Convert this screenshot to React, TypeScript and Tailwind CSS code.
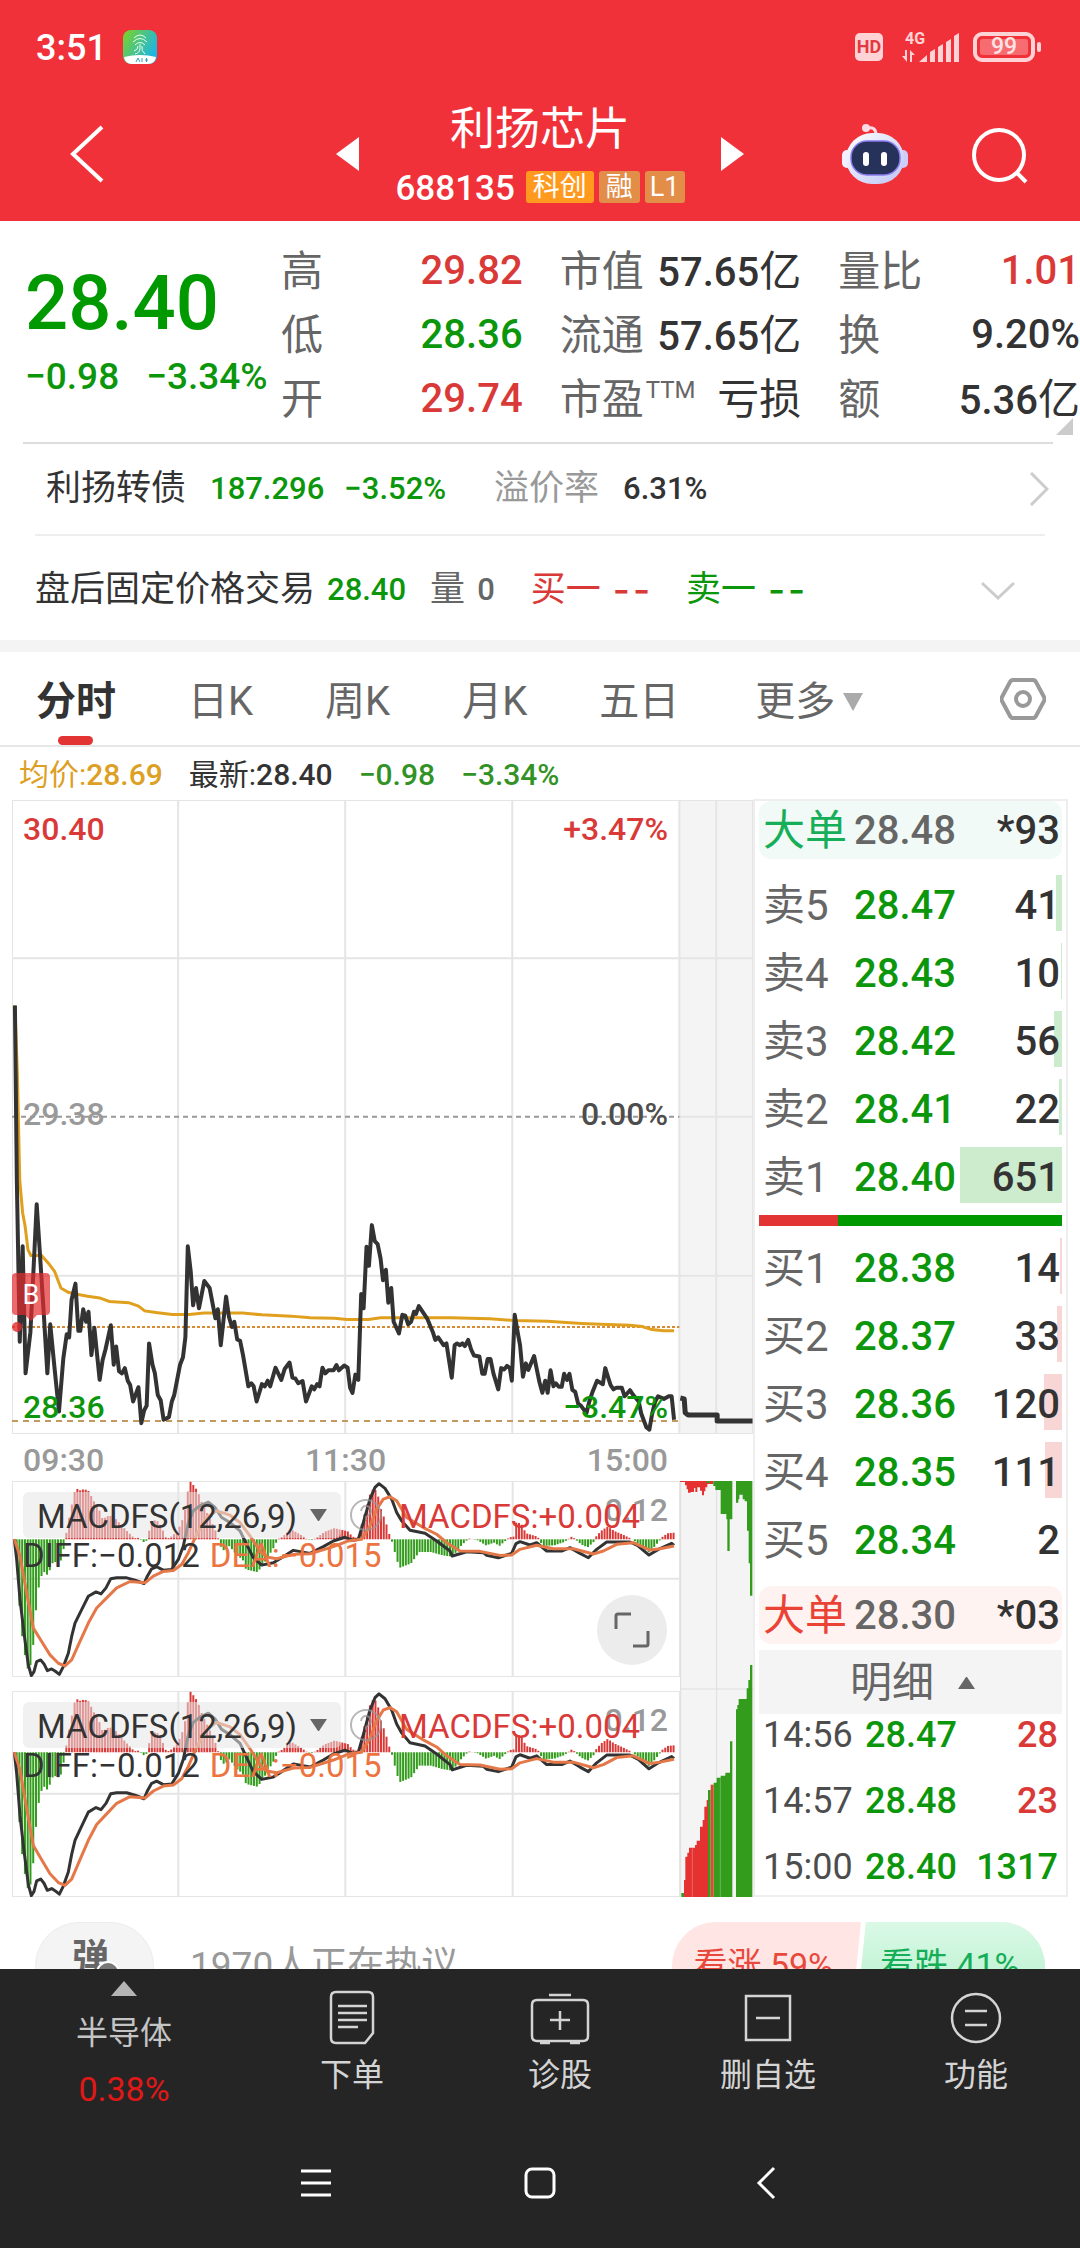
import { useState } from "react";

type Quote = { label: string; sup?: string; value: string; tone: string };
type Level = { label: string; price: string; volume: string; depth: number };

const RED = "text-[#d93a38]";
const GREEN = "text-[#0b960b]";
const DARK = "text-[#333333]";

const quotes: Quote[] = [
  { label: "高", value: "29.82", tone: RED },
  { label: "市值", value: "57.65亿", tone: DARK },
  { label: "量比", value: "1.01", tone: RED },
  { label: "低", value: "28.36", tone: GREEN },
  { label: "流通", value: "57.65亿", tone: DARK },
  { label: "换", value: "9.20%", tone: DARK },
  { label: "开", value: "29.74", tone: RED },
  { label: "市盈", sup: "TTM", value: "亏损", tone: DARK },
  { label: "额", value: "5.36亿", tone: DARK },
];

const asks: Level[] = [
  { label: "卖5", price: "28.47", volume: "41", depth: 6 },
  { label: "卖4", price: "28.43", volume: "10", depth: 1 },
  { label: "卖3", price: "28.42", volume: "56", depth: 8 },
  { label: "卖2", price: "28.41", volume: "22", depth: 3 },
  { label: "卖1", price: "28.40", volume: "651", depth: 102 },
];

const bids: Level[] = [
  { label: "买1", price: "28.38", volume: "14", depth: 2 },
  { label: "买2", price: "28.37", volume: "33", depth: 5 },
  { label: "买3", price: "28.36", volume: "120", depth: 18 },
  { label: "买4", price: "28.35", volume: "111", depth: 17 },
  { label: "买5", price: "28.34", volume: "2", depth: 0 },
];

const trades = [
  { time: "14:56", price: "28.47", volume: "28", tone: RED },
  { time: "14:57", price: "28.48", volume: "23", tone: RED },
  { time: "15:00", price: "28.40", volume: "1317", tone: GREEN },
];

const priceLine =
  "30,496 34,900 40,1272 46,1052 52,1345 62,1250 70,1070 75,955 82,1075 90,1215 97,1345 103,1232 112,1335 121,1433 130,1310 137,1255 142,1262 147,1175 155,1138 161,1247 165,1247 171,1197 177,1226 182,1203 188,1303 194,1240 205,1360 211,1315 217,1290 228,1234 234,1325 239,1283 245,1340 251,1345 257,1333 263,1362 268,1372 274,1410 285,1377 291,1460 297,1430 302,1420 307,1276 314,1325 319,1345 325,1395 331,1407 337,1452 348,1446 354,1410 359,1395 371,1325 377,1308 382,1262 387,1052 393,1110 398,1188 404,1148 410,1195 421,1132 432,1148 444,1218 449,1197 455,1280 466,1168 472,1215 478,1238 483,1226 489,1267 495,1270 501,1303 512,1375 518,1368 523,1375 529,1410 540,1370 546,1375 552,1362 557,1375 568,1332 580,1360 587,1335 597,1320 603,1355 609,1357 615,1368 624,1363 631,1410 643,1375 648,1382 654,1370 659,1375 665,1332 671,1345 677,1338 688,1338 694,1326 699,1338 710,1327 717,1332 722,1378 727,1390 733,1348 739,1360 745,1162 750,1195 756,1053 761,1097 767,1003 773,1040 779,1047 785,1080 790,1130 796,1106 801,1182 807,1148 812,1226 823,1253 830,1210 836,1212 842,1232 848,1226 854,1203 858,1208 864,1190 881,1218 893,1250 898,1268 904,1262 915,1280 921,1276 932,1355 938,1280 943,1276 949,1280 954,1276 959,1282 966,1268 972,1290 978,1304 989,1306 995,1346 1000,1346 1006,1312 1012,1312 1018,1345 1028,1382 1034,1333 1040,1336 1046,1328 1052,1333 1056,1362 1062,1210 1068,1250 1073,1280 1079,1353 1085,1322 1090,1337 1102,1305 1108,1338 1113,1365 1119,1390 1125,1362 1130,1390 1136,1338 1142,1375 1147,1368 1153,1376 1159,1376 1164,1346 1170,1360 1175,1346 1181,1383 1187,1388 1193,1415 1199,1420 1210,1437 1216,1410 1222,1390 1232,1362 1244,1370 1249,1333 1255,1355 1260,1372 1266,1382 1272,1378 1283,1378 1289,1398 1300,1384 1306,1394 1318,1410 1323,1437 1334,1470 1340,1475 1346,1437 1352,1410 1358,1398 1370,1404 1380,1398 1386,1398 1391,1452";

const averageLine =
  "30,496 35,650 40,900 46,975 51,1005 57,1060 63,1073 85,1073 100,1092 112,1110 125,1148 140,1158 155,1162 180,1167 205,1171 225,1179 265,1182 285,1190 298,1201 325,1205 355,1209 390,1209 420,1206 500,1206 540,1210 600,1213 640,1217 690,1218 715,1221 760,1221 785,1217 930,1217 1010,1219 1060,1223 1130,1225 1200,1230 1240,1232 1300,1234 1325,1237 1345,1244 1370,1247 1391,1247";

const diffLine =
  "43,240 50,300 60,420 72,520 85,615 94,647 102,635 110,605 122,600 132,612 142,632 155,627 165,633 178,643 190,620 205,580 215,530 225,490 245,450 265,410 288,397 303,403 318,385 332,358 350,355 380,355 405,362 432,372 442,350 455,328 470,322 490,332 515,330 535,300 550,260 565,190 580,155 600,140 625,129 645,145 665,175 690,190 720,215 740,255 760,295 785,317 820,310 845,295 880,273 930,282 970,262 1000,245 1035,234 1060,243 1075,240 1090,190 1110,120 1125,85 1137,74 1155,88 1175,120 1190,160 1205,185 1230,213 1275,222 1310,245 1350,275 1357,290 1400,277 1450,280 1460,288 1495,295 1535,282 1548,253 1560,247 1590,257 1610,250 1640,275 1685,275 1710,265 1740,282 1765,295 1790,270 1820,248 1890,248 1915,260 1947,287 1975,270 2015,252 2022,258";

const deaLine =
  "43,240 60,290 80,400 100,505 125,545 150,585 175,610 195,618 215,600 240,545 265,490 290,445 320,415 350,385 390,366 435,370 460,350 490,336 520,333 545,315 565,280 590,225 620,175 650,155 690,168 720,190 750,230 780,275 800,293 830,298 880,285 930,283 1000,262 1045,245 1085,240 1110,200 1130,150 1150,120 1170,113 1190,125 1220,175 1270,205 1310,225 1340,250 1380,275 1440,276 1500,288 1535,287 1560,270 1610,258 1660,268 1720,268 1780,284 1810,275 1850,255 1900,250 1950,272 1980,268 2022,260";

// turning points of the histogram, [x, height above the zero line]
const histogram: [number, number][] = [
  [43, 0], [51, -110], [59, -275], [67, -300], [75, -375], [83, -392], [92, -365], [100, -280], [108, -170],
  [117, -125], [125, -98], [133, -98], [141, -110], [150, -80], [158, -65], [170, -72], [183, -60], [192, -2],
  [200, 40], [208, 85], [216, 118], [224, 156], [234, 145], [250, 150], [265, 143], [275, 118], [290, 100],
  [305, 60], [325, 72], [345, 60], [365, 38], [385, 18], [400, 3], [415, 5], [424, -8], [434, -8], [440, 2],
  [448, 45], [465, 60], [480, 40], [495, 5], [505, 3], [530, 25], [545, 60], [555, 100], [562, 155], [570, 175],
  [578, 160], [590, 145], [600, 115], [615, 85], [640, 35], [650, 8], [658, -20], [670, -35], [685, -20],
  [710, -50], [725, -60], [735, -90], [770, -98], [790, -70], [820, -22], [830, 0], [845, 8], [870, 30],
  [905, 10], [915, 2], [930, -3], [945, 3], [970, 22], [1000, 33], [1040, 24], [1055, 8], [1075, 2], [1083, 50],
  [1095, 90], [1105, 130], [1119, 155], [1130, 135], [1140, 90], [1155, 50], [1163, 20], [1170, 4], [1178, -25],
  [1187, -60], [1196, -85], [1230, -72], [1255, -38], [1290, -38], [1325, -48], [1355, -52], [1375, -25],
  [1395, -5], [1405, 2], [1430, -3], [1455, -18], [1480, -10], [1495, -20], [1515, -3], [1525, 6], [1538, 8],
  [1543, 50], [1560, 48], [1575, 18], [1610, 8], [1625, -20], [1660, -18], [1690, -8], [1705, 3], [1710, 8],
  [1720, 3], [1740, -15], [1760, -24], [1778, -8], [1785, 8], [1800, 25], [1820, 38], [1840, 25], [1870, 12],
  [1890, 2], [1905, -8], [1945, -40], [1975, -5], [1985, 8], [2000, 18], [2022, 20],
];

function heightAt(x: number) {
  const i = histogram.findIndex(([px]) => px >= x);
  if (i <= 0) return histogram[0][1];
  const [x0, h0] = histogram[i - 1];
  const [x1, h1] = histogram[i];
  return h0 + ((h1 - h0) * (x - x0)) / (x1 - x0);
}

const bars = Array.from({ length: 239 }, (_, i) => 47 + i * 8.28).map((x) => ({ x, h: heightAt(x) }));

function StatusBar() {
  return (
    <div className="flex h-[94px] items-center justify-between pr-[39px] pl-9 text-white">
      <div className="flex items-center gap-4">
        <span className="pt-0.5 text-[36px] leading-10 font-medium">3:51</span>
        <svg width="34" height="34" viewBox="0 0 34 34">
          <defs>
            <linearGradient id="app" x1="0" x2="1" y1="0" y2="0.6">
              <stop offset="0" stopColor="#7ed321" />
              <stop offset="1" stopColor="#1cb5e8" />
            </linearGradient>
          </defs>
          <rect width="34" height="34" rx="8" fill="url(#app)" />
          <path d="M1 27q16-4 32 0q-1 7-8 7H9q-7 0-8-7Z" fill="#fff" />
          <g fill="none" stroke="#e9fff0" strokeWidth="1">
            <path d="M11 8q6-6 12 0M10 12q7-7 14 0M12 15q5-5 10 0M17 14v4q0 5-5 6M19 16q-1 5 3 8M15 16q0 4-4 5" />
          </g>
          <path d="M13 32l2-4 2 4M19 28v4M22 30h3M23.500 28v4" stroke="#35a0b8" fill="none" />
        </svg>
      </div>
      <div className="flex items-center">
        <span className="flex h-7 w-7 items-center justify-center rounded-[5px] bg-[#ffd3d5] text-[18px] leading-7 font-bold text-[#e23a40]">
          HD
        </span>
        <div className="ml-[18px]">
          <svg className="overflow-visible" width="60" height="32" viewBox="0 0 60 32" fill="#ffd3d5">
            <text x="4" y="13" fontSize="16" fontWeight="700">4G</text>
            <path d="M4 19h2v12L1 25h3ZM9 31V19l5 5h-3v7Z" />
            <path d="M18 31l8-7v7ZM29 21l5-3v13h-5ZM37 16l5-3v18h-5ZM45 11l5-3v23h-5ZM53 5l5-3v29h-5Z" />
          </svg>
        </div>
        <div className="ml-3 flex h-[30px] w-[62px] rounded-[9px] border-4 border-[#ffd3d5] p-[3px]">
          <span className="flex flex-1 items-center justify-center rounded-[3px] bg-[#f76c71] text-[23px] leading-4 font-medium text-[#ffe3e4]">
            99
          </span>
        </div>
        <span className="ml-0.5 h-2.5 w-1 rounded bg-[#ffd3d5]" />
      </div>
    </div>
  );
}

function Robot() {
  return (
    <svg width="66" height="62" viewBox="0 0 66 62">
      <defs>
        <linearGradient id="shell" x1="0" x2="1" y1="0" y2="1">
          <stop offset="0" stopColor="#ffffff" />
          <stop offset="1" stopColor="#bdc4f5" />
        </linearGradient>
      </defs>
      <path d="M25 5q9-2 9 7" fill="none" stroke="#fbdce6" strokeWidth="3" />
      <circle cx="24" cy="5" r="4" fill="#fbdce6" />
      <rect x="0" y="27" width="10" height="18" rx="5" fill="#f4efff" />
      <rect x="56" y="27" width="10" height="18" rx="5" fill="#cfcdf8" />
      <rect x="4" y="10" width="58" height="51" rx="26" fill="url(#shell)" />
      <rect x="9" y="18" width="49" height="34" rx="16" fill="#26325a" stroke="#8a7bf0" strokeWidth="1.500" />
      <rect x="21" y="29" width="6" height="14" rx="3" fill="#fff" />
      <rect x="39" y="29" width="6" height="14" rx="3" fill="#fff" />
    </svg>
  );
}

function TitleBar() {
  return (
    <div className="grid h-[127px] grid-cols-[1fr_408px_1fr] text-white">
      <div className="flex items-center pb-2 pl-[69px]">
        <button aria-label="返回">
          <svg width="36" height="60" viewBox="0 0 36 60" fill="none" stroke="#fff" strokeWidth="4">
            <path d="M33 3L4 30l29 27" />
          </svg>
        </button>
      </div>
      <div className="flex items-center justify-between">
        <button aria-label="上一只" className="pb-2">
          <svg width="23" height="34" viewBox="0 0 23 34"><path d="M0 17L23 0v34Z" fill="#fff" /></svg>
        </button>
        <div className="flex h-full flex-col items-center pt-2">
          <h1 className="text-[45px] leading-[56px]">利扬芯片</h1>
          <div className="mt-[13px] flex h-8 items-center gap-[5px] text-[27px] leading-8">
            <span className="mr-1.5 pt-1 text-[35px] font-medium">688135</span>
            <span className="rounded-[3px] bg-[#ff9a1f] px-[7px]">科创</span>
            <span className="rounded-[3px] bg-[#e28d48] px-[7px]">融</span>
            <span className="rounded-[3px] bg-[#e28d48] px-[5px]">L1</span>
          </div>
        </div>
        <button aria-label="下一只" className="pb-2">
          <svg width="23" height="34" viewBox="0 0 23 34"><path d="M23 17L0 0v34Z" fill="#fff" /></svg>
        </button>
      </div>
      <div className="flex items-center justify-end gap-16 pr-[52px] pb-2">
        <button aria-label="智能助手"><Robot /></button>
        <button aria-label="搜索" className="pt-1">
          <svg width="56" height="56" viewBox="0 0 56 56" fill="none" stroke="#fff" strokeWidth="4">
            <circle cx="27" cy="27" r="25" />
            <path d="M44 44l10 10" />
          </svg>
        </button>
      </div>
    </div>
  );
}

function QuoteBoard() {
  return (
    <section className="relative flex h-[221px] pl-[25px]">
      <div className={`w-64 pt-[44px] font-medium whitespace-nowrap ${GREEN}`}>
        <p className="text-[76px] leading-[76px] text-[#009900]">28.40</p>
        <p className="mt-4 flex gap-[27px] text-[37px] leading-10">
          <span>−0.98</span>
          <span>−3.34%</span>
        </p>
      </div>
      <dl className="grid flex-1 grid-cols-3 content-start gap-x-[37px] pt-[18px]">
        {quotes.map((q) => (
          <div key={q.label} className="flex h-16 items-center justify-between whitespace-nowrap">
            <dt className="flex text-[42px] text-[#666666]">
              {q.label}
              {q.sup && <sup className="top-0 pt-2 pl-0.5 text-[24px] leading-7">{q.sup}</sup>}
            </dt>
            <dd className={q.sup ? `text-[42px] ${q.tone}` : `text-[40px] font-medium ${q.tone}`}>
              {q.value.replace("亿", "")}
              {q.value.endsWith("亿") && <span className="text-[42px] font-normal">亿</span>}
            </dd>
          </div>
        ))}
      </dl>
      <svg className="absolute right-[7px] bottom-[7px]" width="17" height="17" viewBox="0 0 17 17">
        <path d="M17 0v17H0Z" fill="#cccccc" />
      </svg>
    </section>
  );
}

function RelatedRows() {
  return (
    <div className="text-[35px] whitespace-nowrap text-[#333333]">
      <a href="#bond" className="mr-[27px] ml-[23px] flex h-[92px] items-center border-t-2 border-[#dddddd] pr-1 pl-[23px]">
        <span>利扬转债</span>
        <span className={`ml-6 text-[31px] font-medium ${GREEN}`}>187.296</span>
        <span className={`ml-5 text-[31px] font-medium ${GREEN}`}>−3.52%</span>
        <span className="ml-12 text-[#999999]">溢价率</span>
        <span className="ml-6 text-[31px] font-medium">6.31%</span>
        <svg className="ml-auto" width="20" height="34" viewBox="0 0 20 34" fill="none" stroke="#cccccc" strokeWidth="3">
          <path d="M2 1l16 16L2 33" />
        </svg>
      </a>
      <div className="mx-[35px] flex h-[106px] items-center border-t-2 border-[#eeeeee] pt-1">
        <span>盘后固定价格交易</span>
        <span className={`ml-3 text-[31px] font-medium ${GREEN}`}>28.40</span>
        <span className="ml-6 text-[35px] text-[#666666]">量</span>
        <span className="ml-3 text-[31px] font-medium text-[#666666]">0</span>
        <span className={`ml-9 ${RED}`}>买一</span>
        <span className={`ml-3 ${RED}`}><Dashes /></span>
        <span className={`ml-9 ${GREEN}`}>卖一</span>
        <span className={`ml-3 ${GREEN}`}><Dashes /></span>
        <button aria-label="展开" className="mr-[30px] ml-auto">
          <svg width="34" height="19" viewBox="0 0 34 19" fill="none" stroke="#cccccc" strokeWidth="3">
            <path d="M1 2l16 15L33 2" />
          </svg>
        </button>
      </div>
    </div>
  );
}

// price placeholder shown until the after-hours book has an order
function Dashes() {
  return (
    <span className="flex gap-[3px] font-['Inter',sans-serif] text-[37px] leading-10 font-medium">
      <span>-</span>
      <span>-</span>
    </span>
  );
}

const tabs = ["分时", "日K", "周K", "月K", "五日"];

function PeriodTabs() {
  const [active, setActive] = useState("分时");
  return (
    <nav className="flex h-[95px] items-center border-b-2 border-[#e6e6e6] pr-[34px] pl-9 text-[40px] text-[#666666]">
      <div className="flex h-full items-center gap-[72px]">
        {tabs.map((t) => (
          <button
            key={t}
            onClick={() => setActive(t)}
            className={`relative h-full pt-1.5 ${active === t ? "font-bold text-[#333333]" : ""}`}
          >
            {t}
            {active === t && (
              <span className="absolute bottom-0 left-[22px] h-[9px] w-[35px] rounded-md bg-[#e33434]" />
            )}
          </button>
        ))}
        <button className="ml-1 flex items-center gap-2 pt-1.5">
          更多
          <svg width="20" height="18" viewBox="0 0 20 18"><path d="M0 0h20L10 18Z" fill="#aaaaaa" /></svg>
        </button>
      </div>
      <button aria-label="设置" className="ml-auto">
        <svg width="46" height="44" viewBox="0 0 46 44" fill="none" stroke="#999999" strokeWidth="4">
          <path d="M13 3h20q2 0 3 2l8 15q1 2 0 4l-8 15q-1 2-3 2H13q-2 0-3-2L2 24q-1-2 0-4L10 5q1-2 3-2Z" />
          <circle cx="23" cy="22" r="7" />
        </svg>
      </button>
    </nav>
  );
}

function PriceChart() {
  return (
    <div className="relative h-[634px] text-[32px] leading-8 font-medium">
      <svg className="block h-full w-full" viewBox="24 22 1530 1463" preserveAspectRatio="none" fill="none">
        <rect x="1402" y="22" width="152" height="1463" fill="#f4f4f4" />
        <g stroke="#e5e5e5" strokeWidth="2">
          <path vectorEffect="non-scaling-stroke" d="M24 22H1554V1485H24ZM367 22V1485M712 22V1485M1057 22V1485M1402 22V1485M1478 22V1485" />
          <path vectorEffect="non-scaling-stroke" d="M24 387H1554M24 1120H1554M1402 753H1554" />
        </g>
        <path vectorEffect="non-scaling-stroke" d="M24 753H1402" stroke="#999999" strokeWidth="2" strokeDasharray="5 4" />
        <path vectorEffect="non-scaling-stroke" d="M24 1455H1402" stroke="#c29a60" strokeWidth="2" strokeDasharray="6 5" />
        <path vectorEffect="non-scaling-stroke" d="M24 1238H1402" stroke="#d98a35" strokeWidth="2" strokeDasharray="3 2" />
        <polyline vectorEffect="non-scaling-stroke" points={averageLine} stroke="#e0a01e" strokeWidth="3" />
        <polyline vectorEffect="non-scaling-stroke" points={priceLine} stroke="#333333" strokeWidth="4" strokeLinejoin="round" />
        <path vectorEffect="non-scaling-stroke" d="M1404 1402l8 2 2 32 6 5h60v14h73" stroke="#333333" strokeWidth="5" strokeLinejoin="round" />
      </svg>
      <svg className="absolute top-[473px] left-0" width="38" height="62" viewBox="0 0 38 62">
        <path d="M4 0h30q4 0 4 4v34q0 4-4 4h-9l-6 6-6-6H4q-4 0-4-4V4q0-4 4-4Z" fill="#e42a2e" fillOpacity="0.7" />
        <circle cx="5" cy="54" r="5" fill="#e42a2e" fillOpacity="0.8" />
        <text x="19" y="31" fontSize="27" textAnchor="middle" fill="#fff" fontWeight="400">B</text>
      </svg>
      <span className={`absolute top-[13px] left-[11px] ${RED}`}>30.40</span>
      <span className={`absolute top-[13px] right-[85px] ${RED}`}>+3.47%</span>
      <span className="absolute top-[298px] left-[11px] text-[#999999]">29.38</span>
      <span className="absolute top-[298px] right-[85px] text-[#4d4d4d]">0.00%</span>
      <span className={`absolute top-[591px] left-[11px] ${GREEN}`}>28.36</span>
      <span className={`absolute top-[591px] right-[85px] ${GREEN}`}>−3.47%</span>
    </div>
  );
}

function Macd({ className, expand }: { className: string; expand?: boolean }) {
  return (
    <div className={`relative text-[33px] leading-10 whitespace-nowrap ${className}`}>
      <svg className="block h-full w-full" viewBox="36 66 2004 585" preserveAspectRatio="none" fill="none">
        <path
          vectorEffect="non-scaling-stroke"
          d="M36 66H2040V651H36ZM36 358H2040M535 66V651M1036 66V651M1538 66V651"
          stroke="#e5e5e5"
          strokeWidth="2"
        />
        {bars.map((b) => (
          <rect
            key={b.x}
            x={b.x}
            y={b.h > 0 ? 240 - b.h : 240}
            width="6"
            height={Math.abs(b.h)}
            fill={b.h > 0 ? "#d93a38" : "#339c1c"}
          />
        ))}
        <polyline vectorEffect="non-scaling-stroke" points={diffLine} stroke="#333333" strokeWidth="3" strokeLinejoin="round" />
        <polyline vectorEffect="non-scaling-stroke" points={deaLine} stroke="#e57848" strokeWidth="3" strokeLinejoin="round" />
      </svg>
      <span className="absolute top-[9px] right-3 text-[32px] font-medium text-[#999999]">0.12</span>
      <div className="absolute top-[11px] left-[11px] h-[46px] w-[318px]">
        <select
          aria-label="指标"
          className="h-full w-full appearance-none rounded-md bg-[#e6e6e6]/55 pt-1 pl-3.5 text-[33px] leading-[42px] text-[#333333]"
        >
          <option>MACDFS(12,26,9)</option>
        </select>
        <svg className="pointer-events-none absolute top-[17px] right-[14px]" width="17" height="12" viewBox="0 0 17 12">
          <path d="M0 0h17L9 12H8Z" fill="#666666" />
        </svg>
      </div>
      <button aria-label="说明" className="absolute top-4 left-[337px]">
        <svg width="34" height="36" viewBox="0 0 34 36" fill="none" stroke="#999999" strokeOpacity="0.7" strokeWidth="2">
          <circle cx="17" cy="18" r="15" />
          <path d="M12 14q1-5 5-5t5 5q0 3-5 6v3M17 26v2" />
        </svg>
      </button>
      <span className={`absolute top-4 left-[387px] ${RED}`}>MACDFS:+0.004</span>
      <div className="absolute top-[55px] left-[11px] flex gap-2.5">
        <span className="text-[#333333]">DIFF:−0.012</span>
        <span className="text-[#ec7440]">DEA:−0.015</span>
      </div>
      {expand && (
        <button aria-label="全屏" className="absolute right-[13px] bottom-3 flex h-[70px] w-[70px] items-center justify-center rounded-full bg-[#ececec]">
          <svg width="38" height="38" viewBox="0 0 38 38" fill="none" stroke="#666666" strokeWidth="3">
            <path d="M3 18V5q0-2 2-2h13M35 20v13q0 2-2 2H20" />
          </svg>
        </button>
      )}
    </div>
  );
}

function AuctionVolume() {
  return (
    <svg className="h-[416px] w-[73px]" viewBox="930 63 219 1248" preserveAspectRatio="none">
      <rect x="930" y="63" width="219" height="1248" fill="#f4f4f4" />
      <path d="M1040 63V1311M930 687H1149M932 63V1311" stroke="#dddddd" strokeWidth="3" />
      <path d="M930 63H1030V72H1012V82H1006V94H1002V106H996V92H990V82H982V96H976V84H972V96H962V98H954V88H950V76H945V66H930Z" fill="#e63131" />
      <path d="M1010 63h10v6h-10ZM1030 63H1087V178H1079V273H1072V178H1069V162H1052V90H1036V78H1030ZM1098 63H1147V407H1140V310H1136V212H1131V124H1124V118H1118V104H1108V118H1105V128H1098Z" fill="#339c1c" />
      <path d="M942 1311V1260H946V1190H952V1178H957V1163H975V1155H980V1142H990V1100H998V1080H1003V1040H1010V1020H1014V1311Z" fill="#e63131" />
      <path d="M934 1311v-12h8v12ZM1014 1311V990H1022V1311ZM1031 1311V968H1040V953H1052V947H1066V938H1080V844H1087V1311ZM1098 1311V748H1102V735H1106V717H1130V685H1135V660H1140V615H1147V1311Z" fill="#339c1c" />
      <path d="M1022 974h9V1311h-9Z" fill="#d94a30" />
      <path d="M967 1165V1311M1051 955V1311" stroke="#ffffff" strokeOpacity="0.4" strokeWidth="2" />
    </svg>
  );
}

function BigOrder({ price, volume, className, bg }: { price: string; volume: string; className: string; bg: string }) {
  return (
    <div className={`grid h-[58px] grid-cols-[91px_1fr_auto] items-center rounded-xl pt-0.5 pr-0.5 pl-1 text-[40px] font-medium whitespace-nowrap ${bg}`}>
      <span className={`text-[42px] font-normal ${className}`}>大单</span>
      <span className="text-[#666666]">{price}</span>
      <span className="text-[#333333]">*{volume}</span>
    </div>
  );
}

function Levels({ rows, bar }: { rows: Level[]; bar: string }) {
  return (
    <div className="flex flex-col gap-3">
      {rows.map((r) => (
        <div key={r.label} className="relative grid h-14 grid-cols-[91px_1fr_auto] items-center pt-1 pr-0.5 pl-1 text-[40px]">
          <span className={`absolute inset-y-0 right-0 ${bar}`} style={{ width: r.depth }} />
          <span className="text-[42px] text-[#666666]">{r.label}</span>
          <span className="font-medium text-[#0b960b]">{r.price}</span>
          <span className="relative font-medium text-[#333333]">{r.volume}</span>
        </div>
      ))}
    </div>
  );
}

function OrderBook() {
  return (
    <aside className="-mt-px w-[315px] border-2 border-[#eeeeee] px-1 leading-[54px]">
      <BigOrder price="28.48" volume="93" className="text-[#16ae58]" bg="bg-[#f1faf6]" />
      <div className="mt-4"><Levels rows={asks} bar="bg-[#cdebcd]" /></div>
      <div className="my-3 flex h-[11px] bg-[#009900]">
        <span className="w-[26%] bg-[#e33434]" />
      </div>
      <Levels rows={bids} bar="bg-[#f9d6d6]" />
      <div className="mt-5">
        <BigOrder price="28.30" volume="03" className="text-[#ea4336]" bg="bg-[#fff3f1]" />
      </div>
      <button className="mt-1.5 flex h-16 w-full items-center justify-center gap-6 bg-[#f4f4f4] pt-0.5 pl-1 text-[42px] text-[#666666]">
        明细
        <svg width="17" height="12" viewBox="0 0 17 12"><path d="M0 12h17L9 0H8Z" fill="#666666" /></svg>
      </button>
      <table className="-mt-3 -mb-2 w-full text-[36px] font-medium">
        <tbody>
          {trades.map((t) => (
            <tr key={t.time} className="h-[66px]">
              <td className="w-[106px] pl-1 font-normal text-[#4d4d4d]">{t.time}</td>
              <td className="text-[#0b960b]">{t.price}</td>
              <td className={`pr-1 text-right ${t.tone}`}>{t.volume}</td>
            </tr>
          ))}
        </tbody>
      </table>
    </aside>
  );
}

function DiscussionStrip() {
  return (
    <section className="flex h-[72px] items-start overflow-hidden pt-[25px] pr-[35px] pl-[35px] whitespace-nowrap">
      <div className="relative flex h-[88px] w-[119px] shrink-0 justify-center rounded-[44px] border border-[#ececec] bg-[#f4f4f4] pt-4 pr-2 text-[37px] leading-10 font-bold text-[#666666]">
        弹
        <span className="absolute top-[38px] left-[60px] h-6 w-6 rounded-full border-2 border-white bg-[#777777]" />
      </div>
      <span className="ml-9 pt-6 text-[37px] leading-10 text-[#999999]">1970人正在热议</span>
      <div className="relative ml-auto flex h-[88px] w-[373px] overflow-hidden rounded-[44px] bg-[#ffe6e4] text-[34px] leading-10">
        <svg className="absolute inset-0" width="373" height="88" viewBox="0 0 373 88">
          <defs>
            <linearGradient id="fall" x1="0" x2="0" y1="0" y2="1">
              <stop offset="0" stopColor="#daf9e6" />
              <stop offset="1" stopColor="#b4f0cb" />
            </linearGradient>
          </defs>
          <path d="M189 0h5l-9 88h-5Z" fill="#fff" />
          <path d="M194 0h179v88H185Z" fill="url(#fall)" />
        </svg>
        <button className="relative w-1/2 pr-1 pb-0.5 text-[#e9483d]">看涨 59%</button>
        <button className="relative w-1/2 pr-1 pb-0.5 text-[#16ae58]">看跌 41%</button>
      </div>
    </section>
  );
}

const actions = [
  {
    label: "下单",
    icon: <path d="M9 3h32q5 0 5 5v36L38 54H9q-5 0-5-5V8q0-5 5-5ZM11 17h29M11 24h29M11 31h29M11 38h20" />,
  },
  {
    label: "诊股",
    icon: <path d="M2 11H48q5 0 5 5V47q0 5-5 5H2q-5 0-5-5V16q0-5 5-5ZM14 6h22M25 22v19M15 31h20M5 54h10M35 54h10" />,
  },
  { label: "删自选", icon: <path d="M3 7h44v44H3ZM13 29h24" /> },
  {
    label: "功能",
    icon: (
      <>
        <circle cx="25" cy="29" r="24" />
        <path d="M14 22h22M14 36h22" />
      </>
    ),
  },
];

function BottomBar() {
  return (
    <footer className="h-[279px] bg-[#252525] text-[32px] leading-10 text-[#d4d4d4]">
      <div className="flex h-[153px]">
        <button className="flex w-[248px] flex-col items-center pt-3 text-[#c4c4c4]">
          <svg width="26" height="15" viewBox="0 0 26 15"><path d="M0 15h26L13 0Z" fill="#b5b5b5" /></svg>
          <span className="mt-[17px]">半导体</span>
          <span className="mt-4 text-[34px] text-[#e01818]">0.38%</span>
        </button>
        {actions.map((a) => (
          <button key={a.label} className="flex flex-1 flex-col items-center pt-5">
            <svg className="overflow-visible" width="50" height="58" viewBox="0 0 50 58" fill="none" stroke="#d4d4d4" strokeWidth="2.500">
              {a.icon}
            </svg>
            <span className="mt-2">{a.label}</span>
          </button>
        ))}
      </div>
      <div className="flex justify-center gap-48 pt-[43px]">
        <button aria-label="最近任务">
          <svg width="32" height="36" viewBox="0 0 32 36" stroke="#fff" strokeWidth="3"><path d="M1 6h30M1 18h30M1 30h30" /></svg>
        </button>
        <button aria-label="主屏幕">
          <svg width="32" height="36" viewBox="0 0 32 36" fill="none" stroke="#fff" strokeWidth="3">
            <rect x="2" y="4" width="28" height="28" rx="6" />
          </svg>
        </button>
        <button aria-label="返回键">
          <svg width="32" height="36" viewBox="0 0 32 36" fill="none" stroke="#fff" strokeWidth="3"><path d="M26 3L11 18l15 15" /></svg>
        </button>
      </div>
    </footer>
  );
}

export default function App() {
  return (
    <div className="overflow-hidden bg-white font-['Roboto','Noto_Sans_CJK_SC',sans-serif]">
      <header className="bg-[#f13139]">
        <StatusBar />
        <TitleBar />
      </header>
      <QuoteBoard />
      <RelatedRows />
      <div className="h-3 bg-[#f4f4f4]" />
      <PeriodTabs />
      <p className="flex h-[53px] items-center gap-[26px] pt-0.5 pl-[19px] text-[30px] leading-10 font-medium">
        <span className="text-[#dd9f24]"><span className="font-normal">均价:</span>28.69</span>
        <span className="text-[#333333]"><span className="font-normal">最新:</span>28.40</span>
        <span className="text-[#329225]">−0.98</span>
        <span className="text-[#329225]">−3.34%</span>
      </p>
      <main className="flex px-3">
        <div className="min-w-0 flex-1">
          <PriceChart />
          <div className="flex h-[47px] items-center justify-between pt-1 pr-[85px] pl-[11px] text-[32px] font-medium text-[#999999]">
            <span>09:30</span>
            <span>11:30</span>
            <span>15:00</span>
          </div>
          <div className="flex">
            <div className="flex-1">
              <Macd className="h-[196px]" expand />
              <Macd className="mt-3.5 h-[206px]" />
            </div>
            <AuctionVolume />
          </div>
        </div>
        <OrderBook />
      </main>
      <DiscussionStrip />
      <BottomBar />
    </div>
  );
}
